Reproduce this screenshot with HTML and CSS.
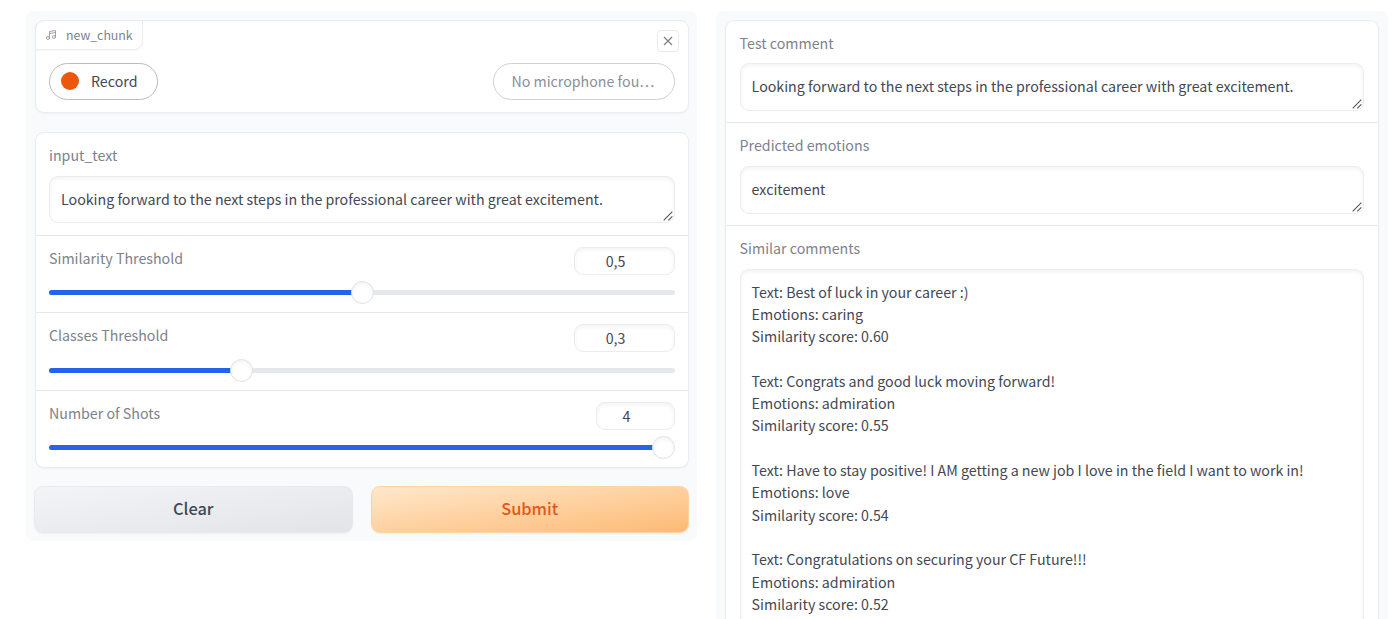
FILE: index.html
```html
<!DOCTYPE html>
<html lang="en">
<head>
<meta charset="utf-8">
<title>Emotion prediction</title>
<link rel="stylesheet" href="styles.css">
</head>
<body>
<main class="app">
  <section class="column column-input">
    <div class="block audio">
      <div class="tag">
        <svg class="note" viewBox="0 0 24 24" fill="none" stroke="currentColor" stroke-width="1.7" stroke-linecap="round" stroke-linejoin="round"><path d="M9 18V5l12-2v13M9 9l12-2"/><circle cx="6" cy="18" r="3"/><circle cx="18" cy="16" r="3"/></svg>
        <span>new_chunk</span>
      </div>
      <button class="close" aria-label="Close"><svg viewBox="0 0 10 10" fill="none" stroke="currentColor" stroke-width="1.2"><path d="M1 1l8 8M9 1L1 9"/></svg></button>
      <div class="audio-row">
        <button class="pill record"><span class="dot"></span>Record</button>
        <div class="pill mic">No microphone fou…</div>
      </div>
    </div>
    <div class="block">
      <div class="row text-row">
        <label class="label">input_text</label>
        <div class="field">Looking forward to the next steps in the professional career with great excitement.<svg class="grip" viewBox="0 0 10 10"><path d="M.7 9.3l8.6-8.6M5.3 9.3l4-4"/></svg></div>
      </div>
      <div class="row slider-row">
        <div class="head"><label class="label">Similarity Threshold</label><div class="number">0,5</div></div>
        <div class="track"><div class="fill" style="width:50%"></div><div class="thumb"></div></div>
      </div>
      <div class="row slider-row">
        <div class="head"><label class="label">Classes Threshold</label><div class="number">0,3</div></div>
        <div class="track"><div class="fill" style="width:30.7%"></div><div class="thumb"></div></div>
      </div>
      <div class="row slider-row">
        <div class="head"><label class="label">Number of Shots</label><div class="number short">4</div></div>
        <div class="track"><div class="fill" style="width:98.2%"></div><div class="thumb"></div></div>
      </div>
    </div>
    <div class="actions">
      <button class="btn clear">Clear</button>
      <button class="btn submit">Submit</button>
    </div>
  </section>
  <section class="column column-output">
    <div class="block results">
      <div class="row text-row">
        <label class="label">Test comment</label>
        <div class="field">Looking forward to the next steps in the professional career with great excitement.<svg class="grip" viewBox="0 0 10 10"><path d="M.7 9.3l8.6-8.6M5.3 9.3l4-4"/></svg></div>
      </div>
      <div class="row text-row">
        <label class="label">Predicted emotions</label>
        <div class="field">excitement<svg class="grip" viewBox="0 0 10 10"><path d="M.7 9.3l8.6-8.6M5.3 9.3l4-4"/></svg></div>
      </div>
      <div class="row text-row comments">
        <label class="label">Similar comments</label>
        <div class="field long">Text: Best of luck in your career :)
Emotions: caring
Similarity score: 0.60

Text: Congrats and good luck moving forward!
Emotions: admiration
Similarity score: 0.55

Text: Have to stay positive! I AM getting a new job I love in the field I want to work in!
Emotions: love
Similarity score: 0.54

Text: Congratulations on securing your CF Future!!!
Emotions: admiration
Similarity score: 0.52</div>
      </div>
    </div>
  </section>
</main>
</body>
</html>
```
FILE: styles.css
```css
* { box-sizing: border-box; }

body {
  margin: 0;
  height: 619px;
  overflow: hidden;
  background: #fff;
  color: #434853;
  font-family: "Noto Sans CJK SC", "Open Sans", sans-serif;
  font-size: 14.23px;
  line-height: 22.3px;
}

button { font: inherit; color: inherit; margin: 0; }

.app {
  display: flex;
  align-items: flex-start;
  gap: 19px;
  height: 619px;
  padding: 11px 12px 0 26px;
}

.column {
  display: flex;
  flex-direction: column;
  gap: 18px;
  background: #f9fafb;
  border-radius: 8px;
}

.column-input { width: 671px; height: 530px; padding: 9px 8px 8px; }
.column-output { width: 672px; height: 608px; padding: 9px 9px 0; border-radius: 8px 8px 0 0; }

.block {
  position: relative;
  background: #fff;
  border: 1px solid #eaecef;
  border-radius: 9px;
  box-shadow: 0 1px 2px rgba(0, 0, 0, .04);
}

.audio { height: 94px; margin-bottom: 1px; padding: 42px 13px 0 14px; }
.column-input .block { margin-left: 1px; }
.column-input .audio, .column-input .row { padding-left: 13px; }
.column-input .field { margin-top: 10px; height: 47px; }

.results {
  flex: 1;
  display: flex;
  flex-direction: column;
  border-bottom: 0;
  border-radius: 9px 9px 0 0;
}

.tag {
  position: absolute;
  top: -1px;
  left: -1px;
  display: flex;
  align-items: center;
  gap: 9px;
  width: 107.5px;
  height: 29.5px;
  padding: 0 0 0 9px;
  border: 1px solid #eaecef;
  border-radius: 9px 0 9px 0;
  box-shadow: 0 1px 2px rgba(0, 0, 0, .04);
  color: #7c828c;
  font-size: 12.3px;
}

.note { width: 12px; height: 12px; color: #90959d; }

.close {
  position: absolute;
  top: 9px;
  right: 9px;
  display: flex;
  align-items: center;
  justify-content: center;
  width: 22px;
  height: 22px;
  padding: 0;
  background: #fff;
  border: 1px solid #e8eaed;
  border-radius: 4px;
  color: #7b8089;
}

.close svg { width: 10px; height: 10px; }

.audio-row { display: flex; justify-content: space-between; }

.pill {
  display: flex;
  align-items: center;
  height: 36.5px;
  padding-bottom: 1px;
  border: 1px solid #b9bbc1;
  border-radius: 19px;
  background: #fff;
}

.record { width: 109px; padding: 0 0 1px 11px; gap: 12px; }
.dot { width: 18px; height: 18px; border-radius: 50%; background: #ea580c; }
.mic { width: 182px; padding-left: 17.4px; border-color: #cfd1d6; color: #8b8f97; white-space: nowrap; }

.row { padding: 0 13px 0 14px; border-top: 1px solid #e5e7eb; }
.row:first-child { border-top: 0; }

.text-row { height: 103px; padding-top: 11px; }
.text-row:first-child { height: 102px; }
.results .text-row { padding-left: 13.6px; padding-right: 13.6px; }
.results .text-row:first-child { height: 101.4px; }

.label { display: block; color: #7d828b; }

.field {
  position: relative;
  height: 48px;
  margin-top: 9px;
  padding: 11px 11px;
  border: 1px solid #eaecee;
  border-radius: 9px;
  box-shadow: inset 0 2px 4px rgba(0, 0, 0, .05);
  white-space: pre;
}

.grip {
  position: absolute;
  right: 1px;
  bottom: 1px;
  width: 10px;
  height: 10px;
  fill: none;
  stroke: #555;
  stroke-width: 1.1;
}

.results .comments {
  flex: 1;
  display: flex;
  flex-direction: column;
  height: auto;
}

.field.long {
  flex: 1;
  height: auto;
  padding-bottom: 0;
  border-bottom: 0;
  border-radius: 9px 9px 0 0;
}

.slider-row { height: 77.5px; padding-top: 11px; }
.head { display: flex; justify-content: space-between; height: 28px; }

.number {
  width: 101px;
  height: 28px;
  padding: 2.3px 18px 0 0;
  border: 1px solid #eaecee;
  border-radius: 9px;
  box-shadow: inset 0 2px 4px rgba(0, 0, 0, .05);
  text-align: center;
}

.number.short { width: 79px; }

.track {
  display: flex;
  align-items: center;
  height: 5px;
  margin-top: 15.5px;
  border-radius: 3px;
  background: #e5e7eb;
}

.fill { height: 5px; border-radius: 3px 0 0 3px; background: #2563eb; }

.thumb {
  flex: none;
  width: 23px;
  height: 23px;
  margin: 0 -11.5px;
  border: 1px solid #dfe1e5;
  border-radius: 50%;
  background: #fff;
  box-shadow: inset 0 2px 4px rgba(0, 0, 0, .05);
}

.actions { display: flex; gap: 18px; }

.btn {
  flex: 1;
  height: 47px;
  padding: 0 0 2px;
  border: 1px solid #e8eaed;
  border-radius: 9px;
  box-shadow: 0 1px 2px rgba(0, 0, 0, .05);
  font-size: 16.4px;
  font-weight: 500;
}

.clear { background: linear-gradient(to bottom right, #f3f4f6, #e2e4e8); color: #414956; }
.submit { background: linear-gradient(to bottom right, #ffe8cc, #fdba74); border-color: #fdd3a3; color: #e0591a; }
```
